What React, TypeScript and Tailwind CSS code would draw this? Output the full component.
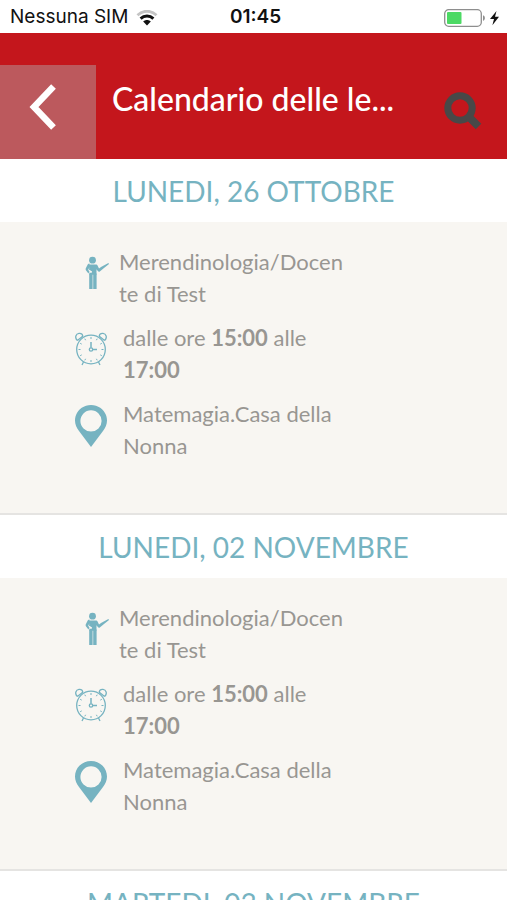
import type { ReactNode } from "react";

type Lesson = { date: string; teacher: string; from: string; to: string; place: string };

const lessons: Lesson[] = [
  { date: "LUNEDI, 26 OTTOBRE", teacher: "Merendinologia/Docente di Test", from: "15:00", to: "17:00", place: "Matemagia.Casa della Nonna" },
  { date: "LUNEDI, 02 NOVEMBRE", teacher: "Merendinologia/Docente di Test", from: "15:00", to: "17:00", place: "Matemagia.Casa della Nonna" },
];

function WifiIcon() {
  return (
    <svg width="22" height="16" viewBox="0 0 22 16" fill="none" aria-hidden="true">
      <path d="M1.5 5.2C6.8-.1 15.2-.1 20.5 5.2" stroke="#c4c4c4" strokeWidth="2.8" />
      <path d="M4.6 8.6c3.6-3.5 9.2-3.5 12.8 0" stroke="#111" strokeWidth="2.9" />
      <path d="M7.2 11.6c2.2-2 5.4-2 7.6 0L11 15.6z" fill="#111" />
    </svg>
  );
}

function BatteryIcon() {
  return (
    <svg width="56" height="20" viewBox="0 0 56 20" fill="none" aria-hidden="true">
      <rect x="1.7" y="1.7" width="36.6" height="16.6" rx="4" stroke="#8e8e8e" strokeWidth="1.3" />
      <rect x="4" y="4" width="14.5" height="12" rx="1" fill="#4cd964" />
      <path d="M40 7.2c2.5.6 2.5 5 0 5.600z" fill="#8e8e8e" />
      <path d="M53.500 3L47 11h4l-1.600 6.200L56 8.700h-4z" fill="#111" />
    </svg>
  );
}

function BackIcon() {
  return (
    <svg width="28" height="46" viewBox="0 0 28 46" fill="none" aria-hidden="true">
      <path d="M24.500 2.500L5 23l19.500 20.500" stroke="#fff" strokeWidth="6.500" />
    </svg>
  );
}

function SearchIcon() {
  return (
    <svg width="40" height="40" viewBox="0 0 40 40" fill="none" stroke="#484848" aria-hidden="true">
      <circle cx="17" cy="17" r="12.200" strokeWidth="7" />
      <path d="M26 26l9.500 9.500" strokeWidth="7.800" />
    </svg>
  );
}

function TeacherIcon() {
  return (
    <svg width="26" height="34" viewBox="0 0 26 34" fill="#76b3c1" aria-hidden="true">
      <circle cx="7.500" cy="4.200" r="3.400" />
      <path d="M4.500 8.500h6.200c1 0 1.700.5 2.100 1.400l1.200 2.500 2-1.300L23.400 7l.6 1-5.600 4.500-3.600 3c-.8.5-1.500.2-2-.5l-1.300-1.800v5.500H4.500v-2.200l1.900.6.700-1.500-3.200-2.100.6-2.200-1.300 2.400 1.300 2-1.100 1.700-2.500-3.200c-.4-.6-.4-1.200-.1-1.900l1.900-3.900c.4-.5 1-.9 1.800-.9z" />
      <path d="M4.200 17.500h3.400V33H4.200zM8.200 17.500h3.400V33H8.200z" />
    </svg>
  );
}

function ClockIcon() {
  return (
    <svg width="32" height="34" viewBox="0 0 32 34" fill="none" stroke="#76b3c1" strokeWidth="1.300" aria-hidden="true">
      <circle cx="16" cy="17.500" r="14.300" />
      <path d="M2.400 8.500C-.8 5.500 1 1.700 4 1.400c2-.2 3.500 1 3.800 2.600M2.400 8.500L8 4M29.600 8.500c3.200-3 1.400-6.800-1.600-7.100-2-.2-3.500 1-3.800 2.600M29.600 8.500L24 4M8.500 30L7 33M23.500 30l1.500 3" />
      <circle cx="16" cy="17.500" r="1.700" />
      <path d="M16 10v5.800M17.700 17.500H22" strokeWidth="1.500" />
      <path d="M16 5v2M16 28v2M3.500 17.500h2M26.500 17.500h2M9.800 6.700l.8 1.500M22.200 6.700l-.8 1.500M5.200 11.300l1.500.8M26.800 11.300l-1.500.8M5.200 23.700l1.500-.8M26.800 23.700l-1.500-.8M9.800 28.300l.8-1.500M22.200 28.300l-.8-1.500" strokeWidth="1" />
    </svg>
  );
}

function PinIcon() {
  return (
    <svg width="32" height="42" viewBox="0 0 32 42" fill="#76b3c1" fillRule="evenodd" aria-hidden="true">
      <path d="M16 0C7 0 0 7 0 15.500c0 4 1.500 7 4 10.500l12 16 12-16c2.500-3.500 4-6.500 4-10.500C32 7 25 0 16 0zm0 5.300a10.600 10.600 0 1 1 0 21.200 10.600 10.600 0 0 1 0-21.200z" />
    </svg>
  );
}

function Row({ icon, children }: { icon: ReactNode; children: ReactNode }) {
  return (
    <li className="flex items-start">
      <span className="shrink-0 pt-[7px]">{icon}</span>
      <p className="min-w-0 max-w-57 break-words">{children}</p>
    </li>
  );
}

function DayTitle({ children }: { children: ReactNode }) {
  return <h2 className="bg-white pb-[11px] pt-[13px] text-center text-[28px] leading-[39px] text-[#76b3c1]">{children}</h2>;
}

export default function App() {
  return (
    <div className="flex h-screen flex-col bg-white font-['Lato',sans-serif]">
      <div className="grid h-[33px] shrink-0 grid-cols-3 items-center px-2 pt-0.5 font-['Inter',sans-serif] text-[19px] text-[#111]">
        <div className="flex items-center gap-2 whitespace-nowrap pl-[2px]">
          <span>Nessuna SIM</span>
          <WifiIcon />
        </div>
        <time className="pl-1 text-center font-semibold">01:45</time>
        <div className="flex justify-end">
          <BatteryIcon />
        </div>
      </div>
      <header className="flex shrink-0 bg-[#c4161c] pt-8">
        <button aria-label="Indietro" className="flex h-[94px] w-24 shrink-0 items-center justify-center bg-[#bc595d] pb-2.5 pr-2.5">
          <BackIcon />
        </button>
        <h1 className="min-w-0 flex-1 truncate pl-4 pt-[14px] text-[32px] font-medium leading-10 text-white">Calendario delle le...</h1>
        <button aria-label="Cerca" className="flex h-[94px] w-20 shrink-0 items-center justify-center pb-0.5 pr-2">
          <SearchIcon />
        </button>
      </header>
      <main className="min-h-0 flex-1 overflow-y-auto [scrollbar-width:none]">
        {lessons.map((l) => (
          <section key={l.date} className="border-b-2 border-[#e5e4e2] bg-[#f8f6f2]">
            <DayTitle>{l.date}</DayTitle>
            <ul className="flex flex-col gap-3 pb-[51px] pl-[75px] pr-8 pt-6 text-[22px] leading-8 text-[#989692]">
              <Row icon={<span className="block w-11 pl-[10px] pt-[3px]"><TeacherIcon /></span>}>{l.teacher}</Row>
              <Row icon={<span className="block w-12 pt-[3px]"><ClockIcon /></span>}>
                dalle ore <b>{l.from}</b> alle <b>{l.to}</b>
              </Row>
              <Row icon={<span className="block w-12"><PinIcon /></span>}>{l.place}</Row>
            </ul>
          </section>
        ))}
        <section>
          <DayTitle>MARTEDI, 03 NOVEMBRE</DayTitle>
        </section>
      </main>
    </div>
  );
}
